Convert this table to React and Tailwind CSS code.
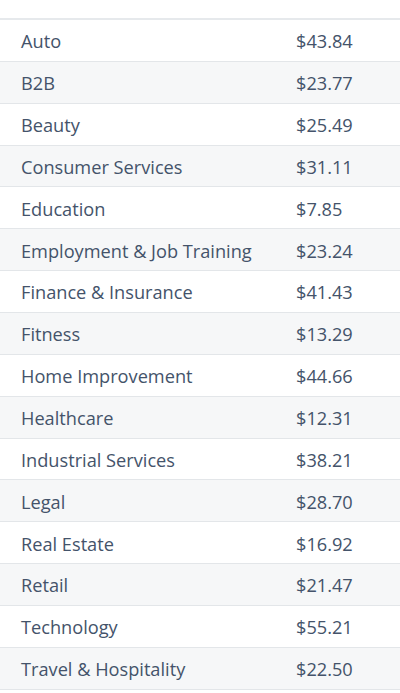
const rows = [
  ["Auto", "$43.84"],
  ["B2B", "$23.77"],
  ["Beauty", "$25.49"],
  ["Consumer Services", "$31.11"],
  ["Education", "$7.85"],
  ["Employment & Job Training", "$23.24"],
  ["Finance & Insurance", "$41.43"],
  ["Fitness", "$13.29"],
  ["Home Improvement", "$44.66"],
  ["Healthcare", "$12.31"],
  ["Industrial Services", "$38.21"],
  ["Legal", "$28.70"],
  ["Real Estate", "$16.92"],
  ["Retail", "$21.47"],
  ["Technology", "$55.21"],
  ["Travel & Hospitality", "$22.50"],
];

export default function App() {
  return (
    <div className="w-[400px] h-[693px] overflow-hidden bg-white text-[#44536a]" style={{ fontFamily: '"Open Sans", sans-serif' }}>
      <div className="h-[18px] border-b-2 border-[#e6e9ec] box-content" />
      <div className="flex flex-col">
        {rows.map(([name, price], i) => (
          <div
            key={name}
            className={`flex items-center h-[41.87px] pt-[3px] border-b border-[#e3e6e9] text-[18.2px] ${i % 2 === 1 ? "bg-[#f6f7f8]" : "bg-white"}`}
          >
            <div className="pl-[21px] w-[296px]">{name}</div>
            <div>{price}</div>
          </div>
        ))}
      </div>
    </div>
  );
}
